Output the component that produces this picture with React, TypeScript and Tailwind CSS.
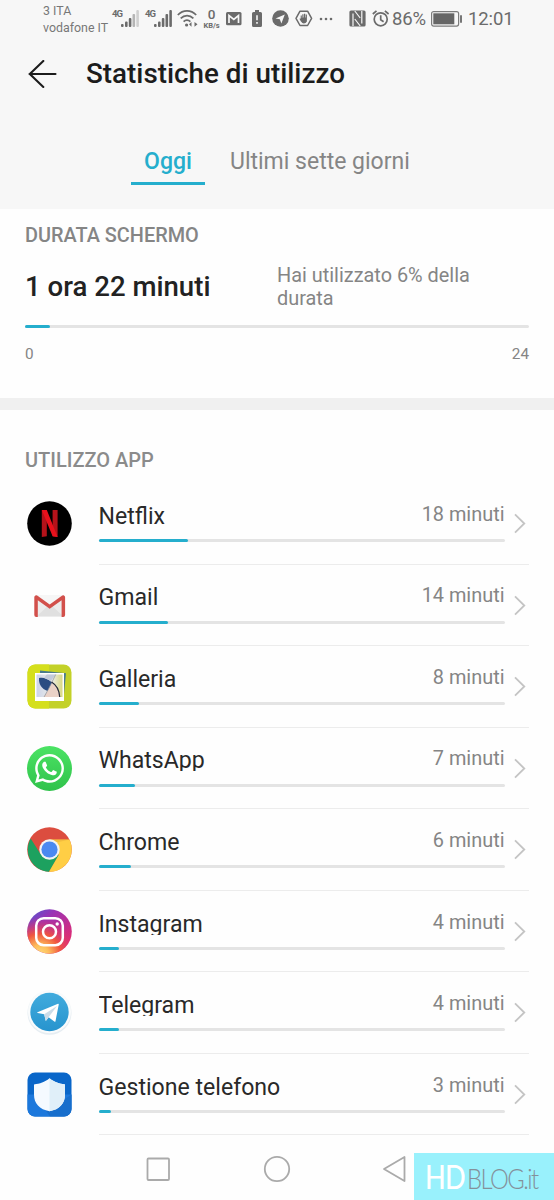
import type { ReactNode } from "react"
import { FaWhatsapp } from "react-icons/fa"

function NetflixIcon() {
  return (
    <svg viewBox="0 0 45 45" className="h-[45px] w-[45px]">
      <circle cx="22.5" cy="22.5" r="22.3" fill="#000" />
      <path d="M14.800 9h5v26.300l-5 .7zM25.600 9h5v27l-5-.7z" fill="#b5121a" />
      <path d="M14.800 9h5l10.800 27-5-.7z" fill="#e8111c" />
    </svg>
  )
}

function GmailIcon() {
  return (
    <svg viewBox="0 0 45 45" className="h-[45px] w-[45px]">
      <path d="M9 12h28v22H9z" fill="#ececec" />
      <path d="M10 33l13-12 13 12z" fill="#e0e0e0" />
      <path d="M10 12l13 12 13-12z" fill="#f6f6f6" />
      <path d="M7.300 32V14.300a2 2 0 0 1 3.200-1.600L22.700 21.500l12.200-8.800a2 2 0 0 1 3.200 1.600V32q0 2-2 2h-1.500V17.200l-11.900 8.600-11.900-8.600V34H9.300q-2 0-2-2z" fill="#d2504b" />
    </svg>
  )
}

function GalleryIcon() {
  return (
    <svg viewBox="0 0 45 45" className="h-[45px] w-[45px]">
      <defs>
        <linearGradient id="photo" x1="0" x2="1" y1="0" y2="0">
          <stop offset="0" stopColor="#ccd3ea" />
          <stop offset=".6" stopColor="#eceee6" />
          <stop offset="1" stopColor="#d8d77c" />
        </linearGradient>
        <clipPath id="photoClip"><path d="M9.500 10.500h26v22.500h-26z" /></clipPath>
      </defs>
      <rect x=".5" y=".5" width="44" height="44" rx="8" fill="#c3d128" />
      <path d="M8.500 .5H22v44H8.500a8 8 0 0 1-8-8v-28a8 8 0 0 1 8-8z" fill="#d5df1c" />
      <path d="M13 6.500l26 2.800-2.500 26-23-4z" fill="#497b8d" />
      <path d="M8 9h29v28H8z" fill="#fff" />
      <g clipPath="url(#photoClip)">
        <path d="M9 10h27v24H9z" fill="url(#photo)" />
        <path d="M16 34l5-8 4-7c5 4 8 8 8 15z" fill="#ead2c7" />
        <path d="M12 14c5-1 9 1 13 4.500L20.500 27c-6-2-9-7-8.500-13z" fill="#2a4c82" />
        <path d="M24 17l5-7h-9l-3 4z" fill="#c3cbdc" />
        <path d="M16.500 34l5-9 7.500-15" fill="none" stroke="#8b929d" strokeWidth=".7" />
        <path d="M24.500 18c5 3 8 8 8.300 16" fill="none" stroke="#242938" strokeWidth="1.200" />
      </g>
    </svg>
  )
}

function WhatsAppIcon() {
  return (
    <div className="flex h-[45px] w-[45px] items-center justify-center rounded-full bg-linear-to-b from-[#4be364] to-[#2fc24b]">
      <FaWhatsapp size={33} color="white" />
    </div>
  )
}

function ChromeIcon() {
  return (
    <svg viewBox="0 0 45 45" className="h-[45px] w-[45px]">
      <circle cx="22.5" cy="22.5" r="22.3" fill="#dc4d3f" />
      <path d="M3.700 11.500A22.300 22.300 0 0 0 22 44.800L32 28 22.500 22.500l-9 4.500z" fill="#1da15f" />
      <path d="M22.500 12.500h19.900A22.300 22.300 0 0 1 22 44.800L31.700 28z" fill="#ffce45" />
      <path d="M22.500 12.500h19.900l-17 4z" fill="#e8a93a" opacity=".5" />
      <circle cx="22.500" cy="22.500" r="10.200" fill="#f3f3f3" />
      <circle cx="22.500" cy="22.500" r="8.100" fill="#4b89f1" />
    </svg>
  )
}

function InstagramIcon() {
  return (
    <svg viewBox="0 0 45 45" className="h-[45px] w-[45px]">
      <defs>
        <linearGradient id="igBase" x1="0.100" y1="0" x2="0.800" y2="0.800">
          <stop offset="0" stopColor="#5557cf" />
          <stop offset=".35" stopColor="#9a32b5" />
          <stop offset="1" stopColor="#dd2c75" />
        </linearGradient>
        <radialGradient id="igGlow" cx=".28" cy="1.020" r=".85">
          <stop offset="0" stopColor="#ffdc7c" />
          <stop offset=".25" stopColor="#fdbe5b" />
          <stop offset=".55" stopColor="#f0563f" />
          <stop offset="1" stopColor="#d72d7c" stopOpacity="0" />
        </radialGradient>
      </defs>
      <circle cx="22.5" cy="22.5" r="22.3" fill="url(#igBase)" />
      <circle cx="22.5" cy="22.5" r="22.3" fill="url(#igGlow)" />
      <g fill="none" stroke="#fff" strokeWidth="2.500">
        <rect x="9.200" y="9.200" width="26.600" height="27" rx="7.500" />
        <circle cx="22.5" cy="22.700" r="6.500" />
      </g>
      <circle cx="30.200" cy="15" r="1.700" fill="#fff" />
    </svg>
  )
}

function TelegramIcon() {
  return (
    <svg viewBox="0 0 45 45" className="h-[45px] w-[45px]">
      <defs>
        <linearGradient id="tg" x1="0" y1="0" x2="0" y2="1">
          <stop offset="0" stopColor="#41abdd" />
          <stop offset="1" stopColor="#2794ce" />
        </linearGradient>
      </defs>
      <circle cx="22.500" cy="22.800" r="22" fill="#e6edf2" />
      <circle cx="22.500" cy="21.700" r="21.500" fill="#f9fbfc" />
      <circle cx="22.500" cy="22" r="19.200" fill="url(#tg)" />
      <path d="M10.500 22.300L31 13.700q1-.2.700 1l-3.200 16.500q-.3 1-1.200.4l-5.700-4.300-2.800 3.700-1.600-6.700-6.400-1.200q-1-.4-.3-.8z" fill="#fff" />
      <path d="M17.200 24.300L30 16l-8.400 11.300-2.800 3.700z" fill="#cbdce8" />
    </svg>
  )
}

function PhoneManagerIcon() {
  return (
    <svg viewBox="0 0 45 45" className="h-[45px] w-[45px]">
      <rect x=".5" y=".5" width="44" height="44" rx="7.500" fill="#0966c9" />
      <path d="M.5 22.500h44V37a7.500 7.500 0 0 1-7.500 7.500H8A7.500 7.500 0 0 1 .5 37z" fill="#1c78dc" />
      <path d="M35 29l9.500-6.500V37a7.500 7.500 0 0 1-7.500 7.500H23l-4-5.500z" fill="#1260b4" opacity=".4" />
      <path d="M22.500 6.300c5 4 9.700 5.300 15.500 6.200v10c0 9-5.500 15-15.500 16.700C12.500 37.500 7 31.500 7 22.500v-10c6-.9 10.500-2.200 15.500-6.200z" fill="#f5faff" />
      <path d="M22.500 6.300c5 4 9.700 5.300 15.500 6.200v10c0 9-5.500 15-15.500 16.700z" fill="#e0eff9" />
    </svg>
  )
}

interface AppUsage {
  name: string
  minutes: number
  width: number
  icon: ReactNode
}

const apps: AppUsage[] = [
  { name: "Netflix", minutes: 18, width: 89.5, icon: <NetflixIcon /> },
  { name: "Gmail", minutes: 14, width: 69, icon: <GmailIcon /> },
  { name: "Galleria", minutes: 8, width: 40.5, icon: <GalleryIcon /> },
  { name: "WhatsApp", minutes: 7, width: 36.5, icon: <WhatsAppIcon /> },
  { name: "Chrome", minutes: 6, width: 32.5, icon: <ChromeIcon /> },
  { name: "Instagram", minutes: 4, width: 20, icon: <InstagramIcon /> },
  { name: "Telegram", minutes: 4, width: 20, icon: <TelegramIcon /> },
  { name: "Gestione telefono", minutes: 3, width: 12, icon: <PhoneManagerIcon /> },
]

function Signal({ weak }: { weak?: boolean }) {
  return (
    <div className="flex h-[17px]">
      <span className="h-2 w-[9px] text-[9.500px] leading-[8px] font-bold tracking-[-1px]">4G</span>
      <svg viewBox="0 0 18 17" className="h-[17px] w-[18px]" fill="#6b6b6b">
        <rect x="0" y="14" width="2.600" height="3" rx="1" />
        <rect x="4" y="11.500" width="2.600" height="5.500" rx="1" />
        <rect x="7.800" y="8" width="2.600" height="9" rx="1" />
        <rect x="11.500" y="4" width="2.600" height="13" rx="1" fill={weak ? "#b5b5b5" : undefined} />
        <rect x="15.300" y="0" width="2.600" height="17" rx="1" fill={weak ? "#d0d0d0" : undefined} />
      </svg>
    </div>
  )
}

function StatusBar() {
  return (
    <div className="flex h-10 items-start pl-[43px] text-[#6b6b6b]">
      <div className="mt-[2px] w-[68px] text-[12.400px] leading-[17px] whitespace-nowrap text-[#777]">
        3 ITA
        <br />
        vodafone IT
      </div>
      <div className="mt-[10px] ml-[1px]"><Signal weak /></div>
      <div className="mt-[10px] ml-[6px]"><Signal /></div>
      <svg viewBox="0 0 22 18" className="mt-[10px] ml-[5px] h-[18px] w-[22px]" fill="none" stroke="#6b6b6b" strokeWidth="1.700">
        <path d="M.8 5C6-.5 14-.5 19.200 5M3.700 8.400c3.700-3.800 9-3.800 12.700 0M6.600 11.600c2-2.100 4.700-2.100 6.800 0" />
        <circle cx="9.600" cy="15" r="1.600" fill="#6b6b6b" stroke="none" />
        <path d="M12 14.300l2.500-2.400v4.800zM20.500 14.300l-3-2.400v4.800z" fill="#6b6b6b" stroke="none" />
      </svg>
      <div className="mt-[8px] ml-[3px] flex w-[19px] flex-col items-center font-medium">
        <span className="text-[13.500px] leading-[13px]">0</span>
        <span className="text-[7.500px] leading-[9px] font-bold">KB/s</span>
      </div>
      <svg viewBox="0 0 16 14" className="mt-[12px] ml-[5px] h-[14px] w-4">
        <rect width="15.500" height="13.300" rx="1.500" fill="#6b6b6b" />
        <path d="M3 11V3.500l4.800 4 4.700-4V11" fill="none" stroke="#f7f7f7" strokeWidth="1.700" />
      </svg>
      <svg viewBox="0 0 10 17" className="mt-[10px] ml-[10px] h-[17px] w-[10px]">
        <path d="M3 0h4v2h1.500Q10 2 10 3.500v12q0 1.500-1.500 1.500h-7Q0 17 0 15.500v-12Q0 2 1.500 2H3z" fill="#6b6b6b" />
        <path d="M4.200 5.300h1.600v5H4.200zM4.200 12h1.600v1.700H4.200z" fill="#f7f7f7" />
      </svg>
      <svg viewBox="0 0 17 17" className="mt-[10px] ml-[10px] h-[17px] w-[17px]">
        <circle cx="8.500" cy="8.500" r="8.300" fill="#6b6b6b" />
        <path d="M3.500 8.400l9.300-4-3.400 9-1.600-4.100z" fill="#f7f7f7" />
      </svg>
      <svg viewBox="0 0 18 17" className="mt-[10px] ml-[6px] h-[17px] w-[18px]">
        <path d="M5 1.200h7.600l4 7.100-4 7.200H5L1 8.300z" fill="none" stroke="#6b6b6b" strokeWidth="1.500" strokeLinejoin="round" />
        <path d="M5.700 5.500h1.100v2.300h.5V4.300h1.200v3.200h.5V3.700h1.200v3.800h.5V4.500h1.200v7q-1 2-3.100 2-1.500 0-3-2.200L4.400 8.700l1.300-.3z" fill="#6b6b6b" />
      </svg>
      <svg viewBox="0 0 14 4" className="mt-[17px] ml-[6px] h-1 w-[14px]" fill="#6b6b6b">
        <circle cx="2" cy="2" r="1.300" />
        <circle cx="7" cy="2" r="1.300" />
        <circle cx="12" cy="2" r="1.300" />
      </svg>
      <svg viewBox="0 0 17 17" className="mt-[10px] ml-[16px] h-[17px] w-[17px]">
        <rect x=".4" y=".4" width="16.200" height="16.200" rx="1.600" fill="#6b6b6b" />
        <path d="M4 16V3.500M12.800 1v12.500" fill="none" stroke="#f7f7f7" strokeWidth="1.200" />
        <path d="M5.800 1l5.400 7M5.800 9l5.400 7" fill="none" stroke="#f7f7f7" strokeWidth="1.200" />
      </svg>
      <svg viewBox="0 0 18 18" className="mt-[10px] ml-[6px] h-[18px] w-[18px]" fill="none" stroke="#6b6b6b" strokeWidth="1.700">
        <circle cx="8.700" cy="9.300" r="6.500" />
        <path d="M.8 4L4.500.9M16.600 4L12.900.9M8.700 5.200v4.500l2.900 2" />
      </svg>
      <span className="mt-[8px] ml-[2px] w-[35px] text-[18.500px] leading-[23px] tracking-[-0.200px]">86%</span>
      <svg viewBox="0 0 32 17" className="mt-[11px] ml-[4px] h-[17px] w-8">
        <rect x=".6" y=".6" width="27" height="14.500" rx="2" fill="none" stroke="#7c7c7c" strokeWidth="1.200" />
        <rect x="2.300" y="2.300" width="21" height="11" fill="#666" />
        <rect x="29" y="4" width="2" height="8" rx="1" fill="#777" />
      </svg>
      <span className="mt-[8px] ml-[5px] text-[18.500px] leading-[23px] tracking-[-0.100px]">12:01</span>
    </div>
  )
}

function UsageRow({ app }: { app: AppUsage }) {
  return (
    <li className="flex h-[81.550px] pl-[26.500px]">
      <div className="mt-[18.200px] w-[45px]">{app.icon}</div>
      <div className="ml-[27px] w-[430.500px] border-b border-[#ececec]">
        <div className="flex">
          <div className="w-[406px]">
            <div className="flex h-[56px] justify-between">
              {/* the row cuts the descenders just under the baseline */}
              <span className="mt-[19.800px] h-6 overflow-hidden text-[23.100px] leading-[27px] text-[#292929]">{app.name}</span>
              <span className="mt-[18.800px] text-[19.900px] leading-[26px] text-[#858585]">{app.minutes} minuti</span>
            </div>
            <div className="h-[3px] rounded-full bg-[#e4e4e4]">
              <div className="h-full rounded-full bg-[#25aecd]" style={{ width: app.width }} />
            </div>
          </div>
          <svg viewBox="0 0 13 21" className="mt-[30px] ml-[9px] h-[21px] w-[13px]" fill="none" stroke="#c4c4c4" strokeWidth="1.800">
            <path d="M1 1.300l9.300 9.200L1 19.700" />
          </svg>
        </div>
      </div>
    </li>
  )
}

export default function App() {
  return (
    <div className="flex h-[1200px] w-[554px] flex-col overflow-hidden bg-[#fefefe] font-['Roboto',sans-serif]">
      <header className="h-[209px] bg-[#f7f7f7]">
        <StatusBar />
        <div className="flex h-[68px] items-center pl-[28px]">
          <svg viewBox="0 0 29 29" className="h-[29px] w-[29px]" fill="none" stroke="#1c1c1c" strokeWidth="2.100" strokeLinecap="round" strokeLinejoin="round">
            <path d="M27.500 14H1.500M15.300 1l-13.500 13 13.500 13" />
          </svg>
          <h1 className="ml-[29px] text-[27.800px] leading-8 font-medium whitespace-nowrap text-[#1c1c1c]">Statistiche di utilizzo</h1>
        </div>
        <nav className="mt-[36px] flex pl-[131px] text-[23px] leading-[36px]">
          <div className="h-[41px] w-[74px] border-b-[3px] border-[#25aecd] text-center font-medium text-[#25aecd]">Oggi</div>
          <div className="ml-[25px] text-[#858585]">Ultimi sette giorni</div>
        </nav>
      </header>

      <section className="h-[189px] px-[25px] pt-[15px]">
        <h2 className="text-[19.900px] leading-6 font-medium text-[#858585]">DURATA SCHERMO</h2>
        <div className="mt-[15px] flex h-[48px] items-center">
          <p className="w-[252px] text-[27.600px] leading-[32px] font-medium text-[#222]">1 ora 22 minuti</p>
          <p className="w-[220px] text-[19.900px] leading-[23.500px] text-[#858585]">Hai utilizzato 6% della durata</p>
        </div>
        <div className="mt-[14px] h-[3px] rounded-full bg-[#e4e4e4]">
          <div className="h-full w-[25px] rounded-full bg-[#25aecd]" />
        </div>
        <div className="mt-[14px] flex justify-between text-[15.300px] leading-6 text-[#858585]">
          <span>0</span>
          <span>24</span>
        </div>
      </section>

      <section className="h-[738px] border-t-[12px] border-[#f0f0f0] pt-[38px]">
        <h2 className="h-[35px] pl-[25px] text-[20px] leading-6 font-medium text-[#8b8b8b]">UTILIZZO APP</h2>
        <ul>
          {apps.map((app) => <UsageRow key={app.name} app={app} />)}
        </ul>
      </section>

      <footer className="flex h-[64px] items-start">
        <svg viewBox="0 0 24 24" className="mt-[21px] ml-[146px] h-6 w-6" fill="none" stroke="#aaa" strokeWidth="1.800">
          <rect x="1.500" y="1.500" width="21.500" height="21.500" rx="1" />
        </svg>
        <svg viewBox="0 0 28 28" className="mt-[19px] ml-[93px] h-7 w-7" fill="none" stroke="#aaa" strokeWidth="1.800">
          <circle cx="14" cy="14" r="12.200" />
        </svg>
        <svg viewBox="0 0 24 28" className="mt-[19px] ml-[91px] h-7 w-6" fill="none" stroke="#aaa" strokeWidth="1.800" strokeLinejoin="round">
          <path d="M22.500 2v24L2 14z" />
        </svg>
        <div className="mt-[17px] ml-[8px] flex h-[47px] w-[140px] items-baseline bg-[#99f1fc] pl-[11px] font-['Lato',sans-serif] leading-[47px]">
          <span className="w-[42px] origin-left scale-x-85 text-[32px] font-medium tracking-[-1px] text-white">HD</span>
          <span className="w-[72px] origin-left scale-x-85 text-[28px] font-light tracking-[-1.800px] text-[#84909a]">BLOG.it</span>
        </div>
      </footer>
    </div>
  )
}
